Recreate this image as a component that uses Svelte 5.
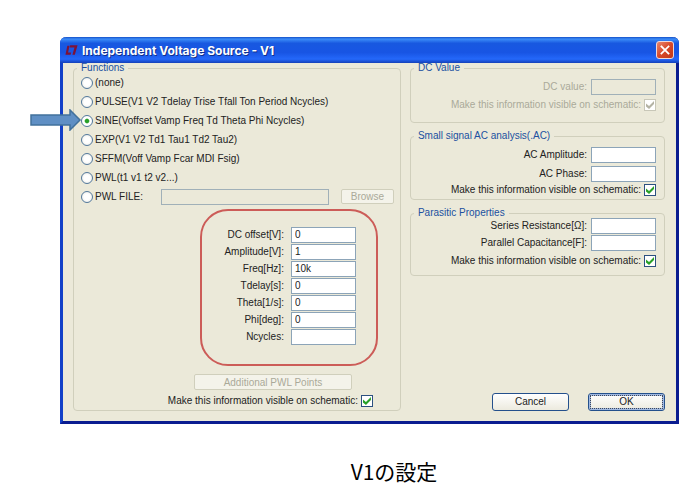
<script>
    const functions = [
        "(none)",
        "PULSE(V1 V2 Tdelay Trise Tfall Ton Period Ncycles)",
        "SINE(Voffset Vamp Freq Td Theta Phi Ncycles)",
        "EXP(V1 V2 Td1 Tau1 Td2 Tau2)",
        "SFFM(Voff Vamp Fcar MDI Fsig)",
        "PWL(t1 v1 t2 v2...)",
        "PWL FILE:",
    ];

    let selected = $state(functions[2]);

    let params = $state([
        { label: "DC offset[V]:", value: "0" },
        { label: "Amplitude[V]:", value: "1" },
        { label: "Freq[Hz]:", value: "10k" },
        { label: "Tdelay[s]:", value: "0" },
        { label: "Theta[1/s]:", value: "0" },
        { label: "Phi[deg]:", value: "0" },
        { label: "Ncycles:", value: "" },
    ]);
</script>

{#snippet visibleCheck(disabled = false)}
    <label class="visible-check" class:disabled>
        Make this information visible on schematic:
        <input type="checkbox" checked {disabled} />
    </label>
{/snippet}

{#snippet textField(label, disabled = false)}
    <label class="field" class:disabled>
        {label}
        <input type="text" {disabled} />
    </label>
{/snippet}

<main>
    <div class="dialog" role="dialog" aria-labelledby="dialog-title">
        <header>
            <svg class="logo" aria-hidden="true" viewBox="0 0 14 12">
                <path
                    d="M2.5 1.5 L0.5 11 H6 L6.6 8.8 H3.3 L4.9 1.5 Z M5.6 1 H13.5 L10.6 11 H8 L10.2 3.2 H5 Z"
                    fill="#7d1238"
                />
            </svg>
            <h1 id="dialog-title">Independent Voltage Source - V1</h1>
            <button class="close" aria-label="Close">
                <svg aria-hidden="true" viewBox="0 0 18 18">
                    <path
                        d="M5 5 L13 13 M13 5 L5 13"
                        stroke="white"
                        stroke-width="2"
                        stroke-linecap="square"
                    />
                </svg>
            </button>
        </header>

        <div class="body">
            <fieldset class="functions">
                <legend>Functions</legend>
                {#each functions as name, i}
                    <div class="function">
                        <label>
                            <input
                                type="radio"
                                name="function"
                                value={name}
                                bind:group={selected}
                            />
                            {name}
                        </label>
                        {#if i == functions.length - 1}
                            <input
                                type="text"
                                class="file"
                                aria-label="PWL file"
                                disabled
                            />
                            <button class="browse" disabled>Browse</button>
                        {/if}
                    </div>
                {/each}

                <div class="params">
                    {#each params as param}
                        <label class="field">
                            {param.label}
                            <input type="text" bind:value={param.value} />
                        </label>
                    {/each}
                </div>

                <button class="points" disabled>Additional PWL Points</button>
                {@render visibleCheck()}
            </fieldset>

            <div class="side">
                <fieldset class="dc">
                    <legend>DC Value</legend>
                    {@render textField("DC value:", true)}
                    {@render visibleCheck(true)}
                </fieldset>
                <fieldset class="ac">
                    <legend>Small signal AC analysis(.AC)</legend>
                    {@render textField("AC Amplitude:")}
                    {@render textField("AC Phase:")}
                    {@render visibleCheck()}
                </fieldset>
                <fieldset class="parasitic">
                    <legend>Parasitic Properties</legend>
                    {@render textField("Series Resistance[Ω]:")}
                    {@render textField("Parallel Capacitance[F]:")}
                    {@render visibleCheck()}
                </fieldset>
                <footer>
                    <button class="action">Cancel</button>
                    <button class="action default">OK</button>
                </footer>
            </div>
        </div>

        <svg class="pointer" aria-hidden="true" viewBox="0 0 52 22">
            <path
                d="M1 6 H40 V1 L50 11 L40 21 V16 H1 Z"
                fill="#5f8fc4"
                stroke="#41719c"
                stroke-width="1.5"
            />
        </svg>
    </div>

    <p class="caption">V1の設定</p>
</main>

<style>
    :global(body) {
        margin: 0;
        background: white;
    }

    main {
        padding: 37px 14px 0 60px;
        font-family: "Liberation Sans", Arial, sans-serif;
        font-size: 10px;
        line-height: 16px;
        color: #222;
    }

    .dialog {
        position: relative;
        border: 3px solid #1240c8;
        border-top: 0;
        border-right-color: #0a1c90;
        border-bottom-color: #0a1c90;
        border-radius: 6px 6px 0 0;
        background: #ebe9d9;
    }

    header {
        display: flex;
        align-items: center;
        height: 26px;
        margin: 0 -3px;
        padding: 0 5px;
        box-sizing: border-box;
        border-radius: 6px 6px 0 0;
        background: linear-gradient(
            #1450c8,
            #3c8cf8 8%,
            #1858e0 24%,
            #1855e4 60%,
            #2468fa 85%,
            #1440b8
        );
    }

    .logo {
        width: 13px;
        height: 12px;
    }

    h1 {
        flex: 1;
        margin: 0 0 0 4px;
        padding-top: 2px;
        font-family: Inter, sans-serif;
        font-size: 12px;
        color: white;
        text-shadow: 1px 1px #10308c;
    }

    button,
    input {
        box-sizing: border-box;
        margin: 0;
        padding: 0;
        font: inherit;
        color: inherit;
    }

    .close {
        width: 18px;
        height: 18px;
        border: 1px solid #f0d8d8;
        border-radius: 3px;
        background: linear-gradient(135deg, #e88870, #d84828 50%, #c03818);
    }

    .close svg {
        display: block;
        width: 16px;
        height: 16px;
    }

    .body {
        display: grid;
        grid-template-columns: 9fr 7fr;
        gap: 9px;
        padding: 0 11px 10px 10px;
    }

    fieldset {
        min-width: 0;
        margin: 0;
        padding: 0 8px 0 3px;
        border: 1px solid #d0cfbc;
        border-radius: 4px;
    }

    legend {
        padding: 0 4px;
        line-height: 10px;
        color: #2050a0;
    }

    .functions {
        padding: 0 6px 1px 3px;
    }

    .function {
        display: flex;
        align-items: center;
        height: 19px;
        padding-left: 4px;
    }

    .function label {
        display: flex;
        align-items: center;
        gap: 2px;
        white-space: nowrap;
    }

    input[type="radio"] {
        appearance: none;
        width: 12px;
        height: 12px;
        border: 1px solid #52789c;
        border-radius: 50%;
        background: radial-gradient(#fff 40%, #e4e4dc);
    }

    input[type="radio"]:checked {
        background: radial-gradient(#28a028 25%, #fff 40%);
    }

    input[type="text"] {
        width: 65px;
        height: 16px;
        padding: 0 3px;
        border: 1px solid #8ca4b8;
        background: white;
    }

    input[type="text"]:disabled {
        background: transparent;
        border-color: #a0b0b8;
    }

    input.file {
        width: 168px;
        margin-left: auto;
    }

    .browse {
        width: 53px;
        height: 15px;
        margin-left: 12px;
    }

    button:disabled {
        border: 1px solid #d0cfbc;
        border-radius: 2px;
        background: #f4f3ea;
        line-height: 13px;
        color: #aaa999;
    }

    .field,
    .visible-check {
        display: flex;
        align-items: center;
        justify-content: flex-end;
        gap: 4px;
        white-space: nowrap;
    }

    .visible-check {
        gap: 3px;
    }

    .disabled {
        color: #aaa999;
    }

    .params {
        display: flex;
        flex-direction: column;
        gap: 1px;
        width: 178px;
        margin: 3px 16px 0 auto;
        padding: 16px 20px 19px 0;
        box-sizing: border-box;
        border: 2px solid #cc5c58;
        border-radius: 28px;
    }

    .params .field {
        gap: 7px;
    }

    .points {
        display: block;
        width: 158px;
        height: 16px;
        margin: 8px 42px 3px auto;
    }

    .functions .visible-check {
        margin-right: 21px;
    }

    input[type="checkbox"] {
        appearance: none;
        display: grid;
        place-content: center;
        width: 12px;
        height: 12px;
        border: 1px solid #2c5080;
        background: white;
    }

    input[type="checkbox"]::before {
        content: "";
        width: 8px;
        height: 8px;
        background: #28a028;
        clip-path: polygon(0 30%, 38% 62%, 100% 0, 100% 38%, 38% 100%, 0 68%);
    }

    input[type="checkbox"]:disabled {
        border-color: #c8c7b8;
    }

    input[type="checkbox"]:disabled::before {
        background: #b4b3a4;
    }

    .side {
        display: flex;
        flex-direction: column;
    }

    .dc {
        padding-top: 6px;
        padding-bottom: 9px;
    }

    .dc .visible-check {
        margin-top: 2px;
    }

    .ac {
        margin-top: 8px;
        padding-top: 6px;
        padding-bottom: 1px;
    }

    .ac .field + .field {
        margin-top: 3px;
    }

    .parasitic {
        margin-top: 8px;
        padding-bottom: 6px;
    }

    .parasitic .field + .field {
        margin-top: 1px;
    }

    .parasitic .visible-check {
        margin-top: 2px;
    }

    footer {
        display: flex;
        justify-content: flex-end;
        gap: 19px;
        margin-top: auto;
    }

    .action {
        width: 77px;
        height: 18px;
        border: 1px solid #24508c;
        border-radius: 3px;
        background: linear-gradient(#fff, #eceade);
        line-height: 14px;
    }

    .default {
        box-shadow: inset 0 0 0 2px #a0b8e0;
        outline: 1px dotted #404858;
        outline-offset: -3px;
    }

    .pointer {
        position: absolute;
        top: 72px;
        left: -33px;
        width: 52px;
        height: 22px;
    }

    .caption {
        margin: 31px 0 0;
        padding-left: 49px;
        font-family: "Noto Sans CJK JP", sans-serif;
        font-size: 21px;
        line-height: 32px;
        text-align: center;
        color: black;
    }
</style>
